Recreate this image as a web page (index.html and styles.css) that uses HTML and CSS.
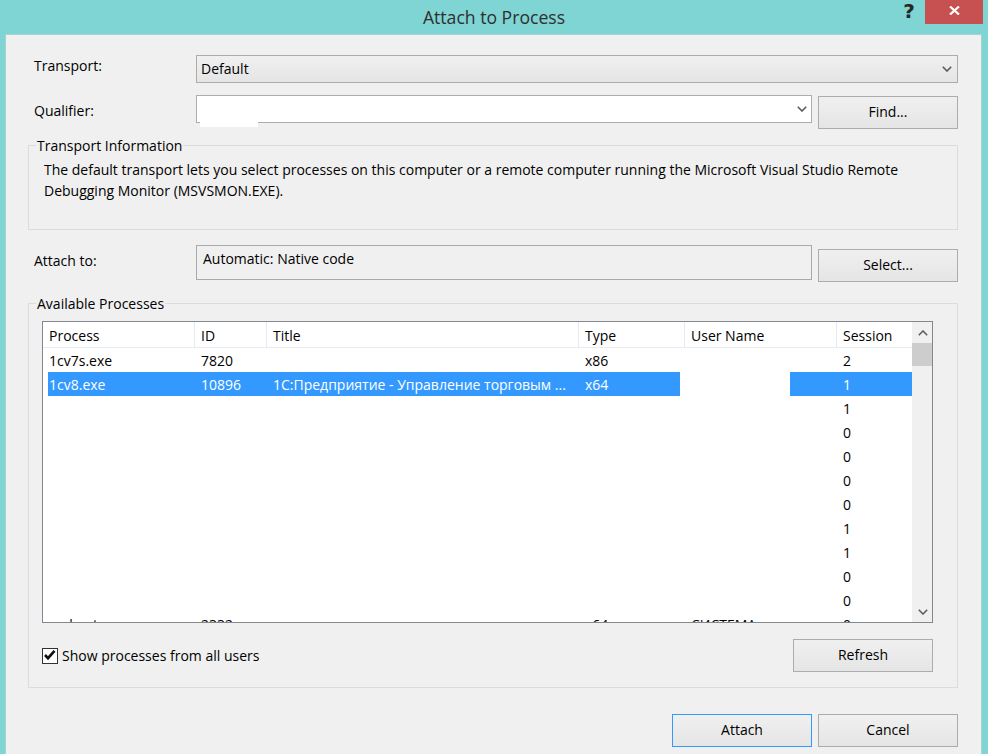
FILE: index.html
```html
<!DOCTYPE html>
<html lang="en">
<head>
<meta charset="utf-8">
<title>Attach to Process</title>
<link rel="stylesheet" href="styles.css">
</head>
<body>
<div class="window">
  <div class="titlebar">
    <div></div>
    <div class="title">Attach to Process</div>
    <div class="caption">
      <span class="help">?</span>
      <span class="close"><svg width="11" height="9" viewBox="0 0 11 9"><path d="M1 0.5 L10 8.5 M10 0.5 L1 8.5" stroke="#fff" stroke-width="2.2" fill="none"/></svg></span>
    </div>
  </div>

  <div class="client">
    <div class="field-row row-transport">
      <div class="lbl">Transport:</div>
      <div class="combo combo-gray"><span>Default</span><svg class="chev" width="10" height="6" viewBox="0 0 10 6"><path d="M0.8 0.8 L5 5 L9.2 0.8" stroke="#5a5a5a" stroke-width="1.6" fill="none"/></svg></div>
    </div>

    <div class="field-row row-qualifier">
      <div class="lbl">Qualifier:</div>
      <div class="combo combo-white"><span></span><svg class="chev" width="10" height="6" viewBox="0 0 10 6"><path d="M0.8 0.8 L5 5 L9.2 0.8" stroke="#5a5a5a" stroke-width="1.6" fill="none"/></svg></div>
      <button class="btn btn-find">Find...</button>
    </div>

    <div class="group group-info">
      <div class="legend">Transport Information</div>
      <div class="desc">The default transport lets you select processes on this computer or a remote computer running the Microsoft Visual Studio Remote Debugging Monitor (MSVSMON.EXE).</div>
    </div>

    <div class="field-row row-attach">
      <div class="lbl">Attach to:</div>
      <div class="attach-box">Automatic: Native code</div>
      <button class="btn btn-select">Select...</button>
    </div>

    <div class="group group-procs">
      <div class="legend">Available Processes</div>
      <div class="list">
        <div class="table">
          <div class="thead">
            <div class="th">Process</div>
            <div class="th">ID</div>
            <div class="th">Title</div>
            <div class="th">Type</div>
            <div class="th">User Name</div>
            <div class="th">Session</div>
          </div>
          <div class="tr"><div class="td">1cv7s.exe</div><div class="td">7820</div><div class="td"></div><div class="td">x86</div><div class="td"></div><div class="td">2</div></div>
          <div class="tr sel"><div class="td">1cv8.exe</div><div class="td">10896</div><div class="td">1C:Предприятие - Управление торговым ...</div><div class="td">x64</div><div class="td"></div><div class="td">1</div></div>
          <div class="tr"><div class="td"></div><div class="td"></div><div class="td"></div><div class="td"></div><div class="td"></div><div class="td">1</div></div>
          <div class="tr"><div class="td"></div><div class="td"></div><div class="td"></div><div class="td"></div><div class="td"></div><div class="td">0</div></div>
          <div class="tr"><div class="td"></div><div class="td"></div><div class="td"></div><div class="td"></div><div class="td"></div><div class="td">0</div></div>
          <div class="tr"><div class="td"></div><div class="td"></div><div class="td"></div><div class="td"></div><div class="td"></div><div class="td">0</div></div>
          <div class="tr"><div class="td"></div><div class="td"></div><div class="td"></div><div class="td"></div><div class="td"></div><div class="td">0</div></div>
          <div class="tr"><div class="td"></div><div class="td"></div><div class="td"></div><div class="td"></div><div class="td"></div><div class="td">1</div></div>
          <div class="tr"><div class="td"></div><div class="td"></div><div class="td"></div><div class="td"></div><div class="td"></div><div class="td">1</div></div>
          <div class="tr"><div class="td"></div><div class="td"></div><div class="td"></div><div class="td"></div><div class="td"></div><div class="td">0</div></div>
          <div class="tr"><div class="td"></div><div class="td"></div><div class="td"></div><div class="td"></div><div class="td"></div><div class="td">0</div></div>
          <div class="tr"><div class="td">svchost.exe</div><div class="td">2332</div><div class="td"></div><div class="td">x64</div><div class="td">СИСТЕМА</div><div class="td">0</div></div>
        </div>
        <div class="scrollbar">
          <div class="sb-btn"><svg width="10" height="6" viewBox="0 0 10 6"><path d="M0.8 5.2 L5 1 L9.2 5.2" stroke="#606060" stroke-width="1.6" fill="none"/></svg></div>
          <div class="sb-thumb"></div>
          <div class="sb-track"></div>
          <div class="sb-btn"><svg width="10" height="6" viewBox="0 0 10 6"><path d="M0.8 0.8 L5 5 L9.2 0.8" stroke="#606060" stroke-width="1.6" fill="none"/></svg></div>
        </div>
      </div>

      <div class="options">
        <label class="check">
          <span class="box"><svg width="14" height="14" viewBox="0 0 14 14"><path d="M2 6 L5 9.2 L11.5 1.8" stroke="#111" stroke-width="2.6" fill="none"/></svg></span>
          <span>Show processes from all users</span>
        </label>
        <button class="btn">Refresh</button>
      </div>
    </div>

    <div class="footer">
      <button class="btn btn-default">Attach</button>
      <button class="btn">Cancel</button>
    </div>
  </div>
</div>
</body>
</html>
```

FILE: styles.css
```css
* {
  box-sizing: border-box;
}

html,
body {
  margin: 0;
  padding: 0;
}

body {
  width: 988px;
  height: 754px;
  overflow: hidden;
  background: #7fd4d4;
  font-family: "Open Sans", "Noto Sans", sans-serif;
  font-size: 14px;
  color: #000;
}

.window {
  height: 754px;
  display: flex;
  flex-direction: column;
}

/* ---------- title bar ---------- */
.titlebar {
  flex: none;
  height: 34px;
  display: grid;
  grid-template-columns: 1fr auto 1fr;
}

.title {
  font-size: 17.6px;
  line-height: 34px;
  color: #2f2f2f;
}

.caption {
  justify-self: end;
  display: flex;
  align-items: flex-start;
  margin-right: 5px;
}

.help {
  width: 14px;
  margin-right: 9px;
  font-family: "DejaVu Sans", sans-serif;
  font-weight: bold;
  font-size: 20px;
  line-height: 22px;
  color: #262626;
  text-align: center;
}

.close {
  width: 58px;
  height: 24px;
  background: #c75050;
  display: flex;
  align-items: center;
  justify-content: center;
  padding-bottom: 3px;
}

/* ---------- client area ---------- */
.client {
  flex: 1;
  margin: 0 6px 0 5px;
  background: #f0f0f0;
  border: 1px solid #a9d3d3;
  border-bottom: none;
  padding: 20px 23px 0 22px;
  overflow: hidden;
}

.field-row {
  display: grid;
  grid-template-columns: 168px 616px 146px;
  align-items: start;
}

.lbl {
  padding-left: 6px;
  line-height: 20px;
}

.row-transport .lbl {
  margin-top: 1px;
}

.row-qualifier {
  margin-top: 12px;
}

.row-qualifier .lbl {
  margin-top: 6px;
}

.combo {
  height: 28px;
  border: 1px solid #acacac;
  display: flex;
  align-items: center;
  justify-content: space-between;
  padding: 0 5px 0 4px;
  line-height: 20px;
}

.combo-gray {
  grid-column: 2 / 4;
  background: linear-gradient(#f0f0f0, #e5e5e5);
}

.combo-white {
  background: #fff;
  border-color: #abadb3;
  position: relative;
  padding-right: 4px;
}

/* small white artifact below the qualifier box */
.combo-white::after {
  content: "";
  position: absolute;
  left: 3px;
  top: 26px;
  width: 58px;
  height: 5px;
  background: #fff;
}

.btn {
  width: 140px;
  height: 33px;
  justify-self: end;
  border: 1px solid #acacac;
  background: linear-gradient(#f0f0f0, #e5e5e5);
  font: inherit;
  color: #000;
  padding: 0 0 1px;
  margin: 0;
  line-height: 20px;
}

.btn-find {
  margin-top: 1px;
}

.btn-default {
  border-color: #3399ff;
}

/* ---------- group boxes ---------- */
.group {
  border: 1px solid #dcdcdc;
}

.legend {
  width: fit-content;
  margin-top: -9px;
  padding: 0 1px;
  line-height: 18px;
  background: #f0f0f0;
}

.group-info {
  margin-top: 16px;
  padding: 0 10px 28px 15px;
}

.group-info .legend {
  margin-left: -8px;
}

.desc {
  margin-top: 5px;
  line-height: 20.5px;
}

.row-attach {
  margin-top: 15px;
}

.row-attach .lbl {
  margin-top: 6px;
}

.attach-box {
  height: 35px;
  border: 1px solid #a9a9a9;
  padding: 3px 6px 0;
  line-height: 20px;
}

.btn-select {
  margin-top: 4px;
}

.group-procs {
  margin-top: 21px;
  padding: 0 24px 15px 13px;
}

.group-procs .legend {
  margin-left: -6px;
}

/* ---------- process list ---------- */
.list {
  margin-top: 8px;
  height: 302px;
  border: 1px solid #828790;
  background: #fff;
  display: flex;
  overflow: hidden;
}

.table {
  width: 869px;
  flex: none;
  overflow: hidden;
}

.thead,
.tr {
  display: grid;
  grid-template-columns: 152px 72px 312px 106px 152px 75px;
}

.thead {
  height: 26px;
  border-bottom: 1px solid #e7ecf3;
}

.th {
  border-right: 1px solid #e3eaf4;
  padding: 2px 0 0 6px;
  line-height: 24px;
  white-space: nowrap;
}

.th:last-child {
  border-right: none;
}

.tr {
  height: 24px;
  line-height: 24px;
  padding-top: 1px;
}

.td {
  padding-left: 6px;
  white-space: nowrap;
  overflow: hidden;
}

.tr.sel {
  color: #fff;
  background: linear-gradient(to right,
      transparent 0 5px,
      #3399ff 5px 637px,
      transparent 637px 747px,
      #3399ff 747px);
}

.scrollbar {
  width: 21px;
  flex: none;
  background: #f0f0f0;
  display: flex;
  flex-direction: column;
}

.sb-btn {
  height: 21px;
  flex: none;
  display: flex;
  align-items: center;
  justify-content: center;
}

.sb-thumb {
  height: 23px;
  flex: none;
  margin-right: 1px;
  background: #cdcdcd;
}

.sb-track {
  flex: 1;
}

/* ---------- options row ---------- */
.options {
  display: flex;
  justify-content: space-between;
  align-items: center;
  margin-top: 16px;
}

.check {
  display: flex;
  align-items: center;
  gap: 4px;
}

.box {
  width: 16px;
  height: 16px;
  border: 1px solid #333;
  background: #fff;
  display: flex;
  align-items: center;
  justify-content: center;
}

/* ---------- footer ---------- */
.footer {
  display: flex;
  justify-content: flex-end;
  gap: 6px;
  margin-top: 26px;
}
```
